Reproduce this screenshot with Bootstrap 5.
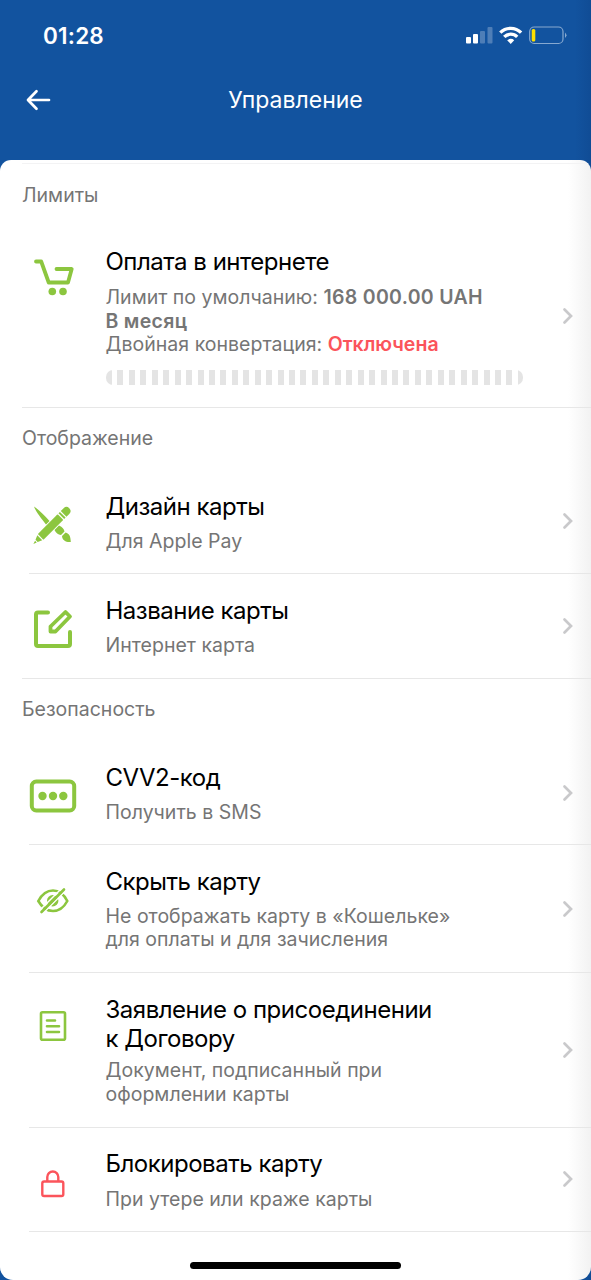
<!DOCTYPE html>
<html lang="ru">
<head>
<meta charset="utf-8">
<meta name="viewport" content="width=device-width, initial-scale=1">
<title>Управление</title>
<link href="https://cdn.jsdelivr.net/npm/bootstrap@5.3.0/dist/css/bootstrap.min.css" rel="stylesheet">
<style>
  body { background: linear-gradient(to right, #12539f 0 575px, #104c95 591px); font-family: Inter, "Liberation Sans", sans-serif; color: #000; height: 1280px; overflow: hidden; }
  svg { display: block; flex: none; }
  .status { height: 72px; padding: 0 24px 0 43px; }
  .clock { font-size: 22.5px; font-weight: 600; line-height: 28px; letter-spacing: .2px; }
  .topbar { height: 56px; margin-bottom: 32px; padding: 0 26px; }
  .topbar h1 { font-size: 23px; font-weight: 400; line-height: 28px; }
  .side { width: 26px; }
  .panel { height: 1120px; border-radius: 11px 11px 13px 13px; padding-top: 3px; background: linear-gradient(to right, #fff 0 568px, #f2f2f2 591px); overflow: hidden; }
  .group-head { height: 62px; margin-left: 22px; border-top: 1px solid #e7e7e7; font-size: 19.5px; line-height: 61px; color: #757575; }
  .panel > section:first-child .group-head { border-top-color: #f3f3f4; line-height: 62px; }
  .item { padding: 24px 17px 0 29px; position: relative; }
  .item + .item::before, .item.last::after { content: ""; position: absolute; left: 29px; right: 0; height: 1px; background: #e7e7e7; }
  .item::before { top: 0; }
  .item.last::after { bottom: 0; }
  .ico { margin-top: 7px; margin-right: 28.500px; }
  .item h2 { font-size: 24px; font-weight: 400; line-height: 28.500px; letter-spacing: -.48px; margin-bottom: 8px; }
  .item h2.two-line { margin-bottom: 6px; }
  .item h2.up { margin-top: -1px; margin-bottom: 9.500px; }
  .item p { font-size: 19.5px; line-height: 23.6px; letter-spacing: .02px; color: #757575; margin: 0; white-space: nowrap; }
  .item b { font-weight: 600; }
  .limit { letter-spacing: .3px; }
  .off { color: #fb545b; }
  .meter { width: 417px; height: 15px; margin-top: 13.500px; border-radius: 7px; background: repeating-linear-gradient(to right, #e4e4e4 0 6px, transparent 6px 11.44px); }
  .chev { margin-top: -23px; }
  .chev.high { margin-top: -25px; }
  .home { width: 211px; height: 7px; border-radius: 4px; background: #000; margin: 30px auto 0; }
</style>
</head>
<body>
<header class="text-white">
  <div class="status d-flex align-items-center">
    <span class="clock me-auto">01:28</span>
    <svg width="102" height="20" viewBox="465 26 102 20">
      <g fill="#fff"><rect x="466" y="37" width="5" height="6.500" rx="1"/><rect x="473" y="34" width="5" height="9.500" rx="1"/><g opacity=".25"><rect x="480" y="31" width="5" height="12.500" rx="1"/><rect x="487.500" y="27" width="5" height="16.500" rx="1"/></g></g>
      <g fill="none" stroke="#fff" stroke-width="3.300"><path d="M500.300 32.700a14.500 14.500 0 0 1 20.800 0"/><path d="M504.200 36.900a9.200 9.200 0 0 1 13 0"/></g>
      <path d="M507.200 40.300a5 5 0 0 1 7 0l-3.500 3.600z" fill="#fff"/>
      <rect x="529.700" y="27" width="33.300" height="16.500" rx="4.500" fill="none" stroke="#87a9d0" stroke-width="1.200"/>
      <rect x="531.700" y="29" width="3.600" height="12.500" rx="1.500" fill="#ffe000"/>
      <path d="M565 32.500v5.500q3-2.700 0-5.500z" fill="#87a9d0"/>
    </svg>
  </div>
  <div class="topbar d-flex align-items-center justify-content-between">
    <svg width="26" height="22" viewBox="26 89 26 22" fill="none" stroke="#fff" stroke-width="2.700" stroke-linecap="round" stroke-linejoin="round"><path d="M49 100H28.500M36.500 91.300L28 100l8.500 8.700"/></svg>
    <h1 class="m-0">Управление</h1>
    <div class="side"></div>
  </div>
</header>
<main class="panel">
  <section>
    <div class="group-head">Лимиты</div>
    <div class="item d-flex" style="height:182px">
      <svg class="ico" width="48" height="48" viewBox="29 256 48 48" fill="none" stroke="#8cc63f" stroke-width="3.800" stroke-linecap="round" stroke-linejoin="round"><path d="M36 261.500h5.200l7.500 21h19.300l3.700-13.500H56.500"/><g fill="#8cc63f" stroke="none"><circle cx="52.300" cy="291.500" r="3.800"/><circle cx="63" cy="291.500" r="3.800"/></g></svg>
      <div class="flex-grow-1">
        <h2 class="up">Оплата в интернете</h2>
        <p>Лимит по умолчанию: <b class="limit">168 000.00 UAH</b><br><b class="limit">В месяц</b><br>Двойная конвертация: <b class="off">Отключена</b></p>
        <div class="meter"></div>
      </div>
      <svg class="chev high align-self-center" width="12" height="18" viewBox="0 0 12 18" fill="none" stroke="#c9c9cb" stroke-width="2.700" stroke-linecap="round"><path d="M2.500 2.500L9 9l-6.500 6.500"/></svg>
    </div>
  </section>
  <section>
    <div class="group-head">Отображение</div>
    <div class="item d-flex" style="height:104px">
      <svg class="ico" width="48" height="48" viewBox="29 500 48 48" fill="#8cc63f"><path d="M34 506.500c3.500 2 9.500 8 15.500 14.500l-3.500 3.500C41 518 35.500 511 34 506.500zM54.500 530l4.500-4.500c3.500 1.500 5 3.500 5.500 6l-3.500 3.500c-3-.5-5-2-6.500-5zM62 536l3.500-3.500c4 1 5 4 5.300 9.500-4.500.5-8.500-1.500-8.800-6z"/><g transform="rotate(-45 53 524.500)"><rect x="35.500" y="520.500" width="28" height="8" rx=".8"/><rect x="64.800" y="520.500" width="2" height="8"/><path d="M68 520.500h4a4 4 0 0 1 0 8h-4zM34.300 521v7l-4.500-2v-3zM28.800 523.300v2.400l-3.500-1.200z"/></g></svg>
      <div class="flex-grow-1"><h2>Дизайн карты</h2><p>Для Apple Pay</p></div>
      <svg class="chev high align-self-center" width="12" height="18" viewBox="0 0 12 18" fill="none" stroke="#c9c9cb" stroke-width="2.700" stroke-linecap="round"><path d="M2.500 2.500L9 9l-6.500 6.500"/></svg>
    </div>
    <div class="item d-flex" style="height:105px">
      <svg class="ico" width="48" height="48" viewBox="29 604 48 48" fill="none" stroke="#8cc63f" stroke-width="4" stroke-linecap="round" stroke-linejoin="round"><path d="M48 612.500H38q-2 0-2 2V644q0 2 2 2h30q2 0 2-2V632"/><path d="M50.500 631.500v-5L65.500 612l4.500 4.500-14.500 15z" stroke-width="3.800"/></svg>
      <div class="flex-grow-1"><h2>Название карты</h2><p>Интернет карта</p></div>
      <svg class="chev align-self-center" width="12" height="18" viewBox="0 0 12 18" fill="none" stroke="#c9c9cb" stroke-width="2.700" stroke-linecap="round"><path d="M2.500 2.500L9 9l-6.500 6.500"/></svg>
    </div>
  </section>
  <section>
    <div class="group-head">Безопасность</div>
    <div class="item d-flex" style="height:104px">
      <svg class="ico" width="48" height="48" viewBox="29 771.500 48 48"><rect x="31.800" y="782" width="42.400" height="29" rx="4.500" fill="none" stroke="#8cc63f" stroke-width="4"/><g fill="#8cc63f"><circle cx="42.500" cy="796.500" r="4.200"/><circle cx="53" cy="796.500" r="4.200"/><circle cx="63.300" cy="796.500" r="4.200"/></g></svg>
      <div class="flex-grow-1"><h2>CVV2-код</h2><p>Получить в SMS</p></div>
      <svg class="chev align-self-center" width="12" height="18" viewBox="0 0 12 18" fill="none" stroke="#c9c9cb" stroke-width="2.700" stroke-linecap="round"><path d="M2.500 2.500L9 9l-6.500 6.500"/></svg>
    </div>
    <div class="item d-flex" style="height:128px">
      <svg class="ico" width="48" height="48" viewBox="29 875 48 48" fill="none" stroke="#8cc63f" stroke-width="2.600" stroke-linecap="round"><path d="M38.300 901Q44 890.500 53 890.500T67.300 901Q62 911 53 911T38.300 901z"/><circle cx="52.700" cy="900.700" r="5.700" fill="#8cc63f" stroke="none"/><path d="M43.300 913L65.800 890.500" stroke="#fff" stroke-width="1.500"/><path d="M39.800 910.200L62.300 887.700" stroke="#fff" stroke-width="1.500"/><path d="M41.500 912L64 889.500" stroke-width="2.600"/></svg>
      <div class="flex-grow-1"><h2>Скрыть карту</h2><p>Не отображать карту в «Кошельке»<br>для оплаты и для зачисления</p></div>
      <svg class="chev align-self-center" width="12" height="18" viewBox="0 0 12 18" fill="none" stroke="#c9c9cb" stroke-width="2.700" stroke-linecap="round"><path d="M2.500 2.500L9 9l-6.500 6.500"/></svg>
    </div>
    <div class="item d-flex" style="height:155px">
      <svg class="ico" width="48" height="48" viewBox="29 1003 48 48" fill="none" stroke="#8cc63f" stroke-width="2.600" stroke-linecap="round"><rect x="41" y="1012.300" width="24" height="27.500" rx="1.500"/><path d="M47 1020.500h8M47 1026.200h12M47 1032h12"/></svg>
      <div class="flex-grow-1"><h2 class="two-line">Заявление о присоединении<br>к Договору</h2><p>Документ, подписанный при<br>оформлении карты</p></div>
      <svg class="chev align-self-center" width="12" height="18" viewBox="0 0 12 18" fill="none" stroke="#c9c9cb" stroke-width="2.700" stroke-linecap="round"><path d="M2.500 2.500L9 9l-6.500 6.500"/></svg>
    </div>
    <div class="item last d-flex" style="height:105px">
      <svg class="ico" width="48" height="48" viewBox="29 1158 48 48" fill="none" stroke="#fb545b" stroke-width="2.400"><rect x="42.300" y="1181.500" width="21" height="14.500" rx="1.800"/><path d="M47.300 1181v-4a5.500 5.500 0 0 1 11 0v4"/></svg>
      <div class="flex-grow-1"><h2 class="up">Блокировать карту</h2><p>При утере или краже карты</p></div>
      <svg class="chev high align-self-center" width="12" height="18" viewBox="0 0 12 18" fill="none" stroke="#c9c9cb" stroke-width="2.700" stroke-linecap="round"><path d="M2.500 2.500L9 9l-6.500 6.500"/></svg>
    </div>
  </section>
  <div class="home"></div>
</main>
<script src="https://cdn.jsdelivr.net/npm/bootstrap@5.3.0/dist/js/bootstrap.bundle.min.js"></script>
</body>
</html>
